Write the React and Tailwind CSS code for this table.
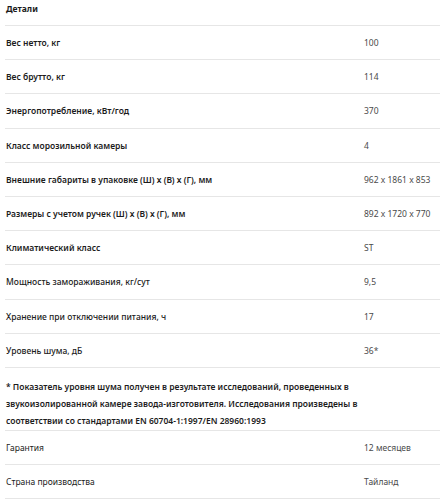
import React from 'react';

const specs = [
  { label: 'Вес нетто, кг', value: '100', weight: 'font-semibold' },
  { label: 'Вес брутто, кг', value: '114', weight: 'font-semibold' },
  { label: 'Энергопотребление, кВт/год', value: '370', weight: 'font-semibold' },
  { label: 'Класс морозильной камеры', value: '4', weight: 'font-semibold' },
  { label: 'Внешние габариты в упаковке (Ш) х (В) х (Г), мм', value: '962 x 1861 x 853', weight: 'font-semibold' },
  { label: 'Размеры с учетом ручек (Ш) х (В) х (Г), мм', value: '892 x 1720 x 770', weight: 'font-semibold' },
  { label: 'Климатический класс', value: 'ST', weight: 'font-semibold' },
  { label: 'Мощность замораживания, кг/сут', value: '9,5', weight: 'font-medium' },
  { label: 'Хранение при отключении питания, ч', value: '17', weight: 'font-medium' },
  { label: 'Уровень шума, дБ', value: '36*', weight: 'font-medium' },
];

const extra = [
  { label: 'Гарантия', value: '12 месяцев' },
  { label: 'Страна производства', value: 'Тайланд' },
];

const Row = ({ label, value, weight }) => (
  <div className="grid h-[34.2px] grid-cols-[359px_1fr] items-center border-b border-[#e6e6e6]">
    <span className={`pl-px text-[#1c1c1c] ${weight}`}>{label}</span>
    <span className="text-[#4a4a4a]">{value}</span>
  </div>
);

export default function App() {
  return (
    <div className="h-[499px] overflow-hidden bg-white pl-[5px] font-['Noto_Sans',sans-serif] text-[8.5px] leading-[17px]">
      {/* Header */}
      <div className="h-[26px] border-b border-[#e6e6e6] pl-px font-bold text-[#1c1c1c]">
        Детали
      </div>

      {specs.map((s) => (
        <Row key={s.label} {...s} />
      ))}

      {/* Footnote */}
      <div className="h-[63px] border-b border-[#e6e6e6] pt-[10px]">
        <p className="max-w-[365px] pl-px font-semibold text-[#1c1c1c]">
          * Показатель уровня шума получен в результате исследований, проведенных в звукоизолированной камере завода-изготовителя. Исследования произведены в соответствии со стандартами EN 60704-1:1997/EN 28960:1993
        </p>
      </div>

      {extra.map((s) => (
        <Row key={s.label} {...s} weight="font-normal" />
      ))}
    </div>
  );
}
